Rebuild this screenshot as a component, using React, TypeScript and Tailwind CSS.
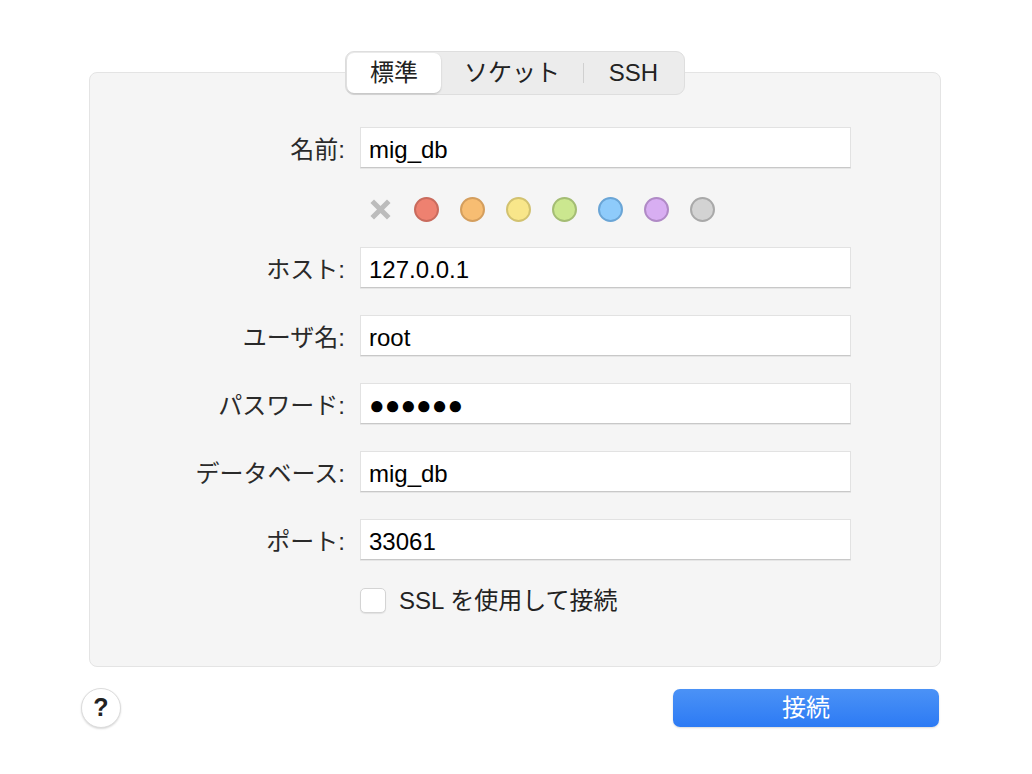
const fields = [
  { label: 'ホスト:', value: '127.0.0.1' },
  { label: 'ユーザ名:', value: 'root' },
  { label: 'パスワード:', value: '●●●●●●', secret: true },
  { label: 'データベース:', value: 'mig_db' },
  { label: 'ポート:', value: '33061' },
];

const swatches = [
  'bg-[#ee8170] border-[#c96b5d]',
  'bg-[#f7bd72] border-[#d49e5d]',
  'bg-[#f8e68a] border-[#d2c270]',
  'bg-[#cbe78f] border-[#a4bd74]',
  'bg-[#8ecbfb] border-[#6aa5d6]',
  'bg-[#d8aef2] border-[#b08ac6]',
  'bg-[#d3d3d3] border-[#a9a9a9]',
];

function Row({ label, value, secret }: { label: string; value: string; secret?: boolean }) {
  return (
    <div className="flex items-center">
      <div className="w-[270px] pr-[15px] pt-[5px] text-right text-[24px] text-[#2a2a2a]">{label}</div>
      <div className="flex h-[41px] w-[491px] items-center border border-[#e2e2e2] border-b-[#c8c8c8] bg-white pl-[8px] pt-[4px] text-[24px] text-black shadow-[0_1px_0_rgba(0,0,0,0.06)]">
        <span className={secret ? 'text-[26px]' : ''}>{value}</span>
      </div>
    </div>
  );
}

export default function App() {
  return (
    <div
      className="h-[774px] w-[1032px] bg-white"
      style={{ fontFamily: '"Liberation Sans", "Noto Sans CJK JP", sans-serif' }}
    >
      <div className="flex flex-col pt-[51px]">
        {/* tabs */}
        <div className="relative z-10 -mb-[23px] ml-[345px] flex h-[44px] w-[340px] items-center rounded-[9px] border border-[#dedede] bg-[#ececec] p-[1px] text-[24px] text-[#222]">
          <div className="flex h-[40px] w-[94px] items-center justify-center rounded-[7px] bg-white shadow-[0_1px_2px_rgba(0,0,0,0.2)]">標準</div>
          <div className="flex w-[142px] items-center justify-center">ソケット</div>
          <div className="h-[20px] w-px bg-[#d0d0d0]" />
          <div className="flex flex-1 items-center justify-center">SSH</div>
        </div>

        {/* panel */}
        <div className="ml-[89px] h-[595px] w-[852px] rounded-[8px] border border-[#e4e4e4] bg-[#f5f5f5] pt-[54px]">
          <Row label="名前:" value="mig_db" />

          <div className="mt-[29px] flex items-center gap-[21px] pl-[278px]">
            <svg width="25" height="25" viewBox="0 0 25 25">
              <path d="M6 6 L19 19 M19 6 L6 19" stroke="#bcbcbc" strokeWidth="5" strokeLinecap="square" />
            </svg>
            {swatches.map((c, i) => (
              <div key={i} className={`h-[25px] w-[25px] rounded-full border-2 ${c}`} />
            ))}
          </div>

          <div className="mt-[25px] flex flex-col gap-[27px]">
            {fields.map((f) => (
              <Row key={f.label} {...f} />
            ))}
          </div>

          <div className="mt-[28px] flex items-center pl-[270px]">
            <div className="h-[25px] w-[26px] rounded-[5px] border border-[#d4d4d4] bg-white shadow-[0_1px_1px_rgba(0,0,0,0.08)]" />
            <span className="ml-[13px] text-[24px] leading-[25px] text-[#222]">SSL を使用して接続</span>
          </div>
        </div>

        {/* footer */}
        <div className="mt-[21px] flex items-center justify-between pl-[81px] pr-[93px]">
          <div className="flex h-[40px] w-[40px] items-center justify-center rounded-full border border-[#dcdcdc] bg-white text-[25px] font-bold text-[#222] shadow-[0_1px_2px_rgba(0,0,0,0.15)]">
            ?
          </div>
          <button className="h-[38px] w-[266px] rounded-[7px] bg-gradient-to-b from-[#4b92f6] to-[#2c7af4] text-[24px] text-white shadow-[0_1px_2px_rgba(0,0,0,0.15)]">
            接続
          </button>
        </div>
      </div>
    </div>
  );
}
